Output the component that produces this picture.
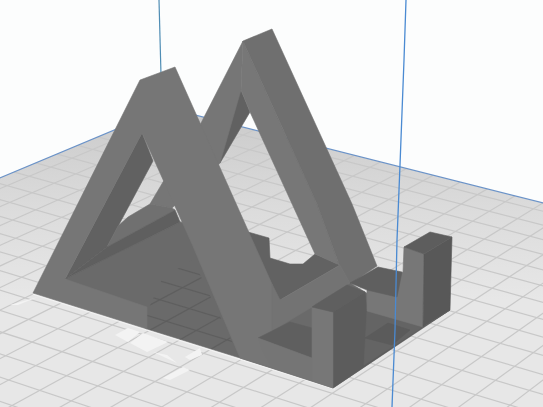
import React from 'react';

type Shape = { points: string; fill: string };

// vanishing points of the two grid directions, read off the plate edges
const VA = [1800, -572];
const VB = [-3825, -898];
const ref = (t: number) => [t, 400 + 0.058 * t];

const gridLines = () => {
  const lines: number[][] = [];
  const extend = (v: number[], p: number[]) => {
    const dx = p[0] - v[0];
    const dy = p[1] - v[1];
    return [v[0], v[1], p[0] + dx * 0.6, p[1] + dy * 0.6];
  };
  for (let k = -40; k < 60; k++) lines.push(extend(VA, ref(-72 + k * 46)));
  for (let k = -30; k < 30; k++) lines.push(extend(VB, ref(259 + k * 88)));
  return lines;
};

const model: Shape[] = [
  // dark block and floor patch seen through the back frame
  { points: '248,232 269,238 270,258 290,264 303,264 315,254 340,265 280,300 272,295 260,270', fill: '#626262' },
  // inner dark face of the back frame
  { points: '241,90 250,112 220,163 211,143', fill: '#616161' },
  // back frame, left arm
  { points: '243,41 200,125 163,182 150,204 172,208 220,163 241,90', fill: '#767676' },
  // back frame, right arm inner side
  { points: '243,41 317,204 339,264 337,264 315,254 250,112 241,90', fill: '#777777' },
  // back frame, outer face
  { points: '243,41 272,29 352,204 377,266 350,284 339,264 317,204', fill: '#6f6f6f' },
  // dark strip in the first opening
  { points: '142,133 153,161 130,204 107,247 65,279', fill: '#616161' },
  // low bars behind the front frame
  { points: '118,226 128,217 150,204 172,208 175,210 107,247', fill: '#707070' },
  { points: '65,279 107,247 175,210 180,222', fill: '#5f5f5f' },
  // front frame
  { points: '33,293 140,80 175,67 272,284 272,368 240,358 192,244 142,133 65,279 147,307 147,329', fill: '#767676' },
  // base bars on the right
  { points: '272,284 280,300 340,265 350,283 315,304 312,307 272,331', fill: '#737373' },
  { points: '258,338 290,322 312,328 312,358', fill: '#5f5f5f' },
  { points: '258,338 312,358 312,381 272,368 262,350', fill: '#757575' },
  // far wall seen from the right
  { points: '333,312 365,292 367,311 423,327 450,310 333,388', fill: '#5c5c5c' },
  { points: '367,311 423,327 364,365', fill: '#646464' },
  { points: '365,338 388,323 410,330 392,345', fill: '#5b5b5b' },
  // near pillar
  { points: '312,307 333,312 333,388 312,381', fill: '#777777' },
  { points: '312,307 347,285 365,292 333,312', fill: '#5f5f5f' },
  // far pillar
  { points: '404,247 424,254 423,327 367,311 367,290 403,272', fill: '#777777' },
  { points: '350,283 378,267 402,272 397,297 367,290', fill: '#5f5f5f' },
  { points: '424,254 452,237 450,310 423,327', fill: '#585858' },
  { points: '404,247 430,232 452,237 424,254', fill: '#5d5d5d' },
];

const glare = [
  '10,305 27,300 38,297 18,305',
  '115,335 128,328 140,332 128,342',
  '130,343 143,333 168,342 147,352',
  '153,352 167,355 177,363',
  '185,357 200,348 202,355 190,360',
  '163,378 183,367 190,370 170,380',
];

const App: React.FC = () => {
  const lines = gridLines();
  return (
    <div className="w-[543px] h-[407px] overflow-hidden bg-[#fcfdfd]">
      <svg width="543" height="407" viewBox="0 0 543 407" className="block">
        <defs>
          <linearGradient id="plate" gradientUnits="userSpaceOnUse" x1="0" y1="125" x2="0" y2="300">
            <stop offset="0" stopColor="#cdcdcd" />
            <stop offset="0.5" stopColor="#dcdcdc" />
            <stop offset="1" stopColor="#e7e7e7" />
          </linearGradient>
          <clipPath id="plateClip">
            <polygon points="167,108 -10,182 -10,420 553,420 553,205.5" />
          </clipPath>
          <clipPath id="floorClip">
            <polygon points="163,277 193,260 240,358 147,329 147,312" />
          </clipPath>
          <g id="grid">
            {lines.map((l, i) => (
              <line key={i} x1={l[0]} y1={l[1]} x2={l[2]} y2={l[3]} strokeWidth="1.2" />
            ))}
          </g>
        </defs>

        <line x1="159" y1="0" x2="161" y2="75" stroke="#4f8db4" strokeWidth="1.2" />

        <polygon points="167,108 -10,182 -10,420 553,420 553,205.5" fill="url(#plate)" />
        <g clipPath="url(#plateClip)" stroke="#c8c8c8">
          <use href="#grid" />
        </g>
        <polyline points="-10,182 167,108 553,205.5" fill="none" stroke="#6b93c8" strokeWidth="1.2" />
        {glare.map((p, i) => (
          <polygon key={i} points={p} fill="#f3f3f3" />
        ))}
        <polyline points="33,294 335,389" fill="none" stroke="#f2f2f2" strokeWidth="1.5" />

        {/* floor of the stand, the plate grid shows through it */}
        <polygon points="65,279 180,222 248,232 272,295 280,300 350,283 423,327 333,388 240,358 147,329" fill="#6a6a6a" stroke="#6a6a6a" strokeWidth="0.6" />
        <g clipPath="url(#floorClip)" stroke="#5b5b5b" opacity="0.75">
          <use href="#grid" />
        </g>

        {model.map((s, i) => (
          <polygon key={i} points={s.points} fill={s.fill} stroke={s.fill} strokeWidth="0.6" />
        ))}

        <polyline points="406,0 404,60 400,165 397,240 395,330 392,407" fill="none" stroke="#4a8ad2" strokeWidth="1.3" />
      </svg>
    </div>
  );
};

export default App;
